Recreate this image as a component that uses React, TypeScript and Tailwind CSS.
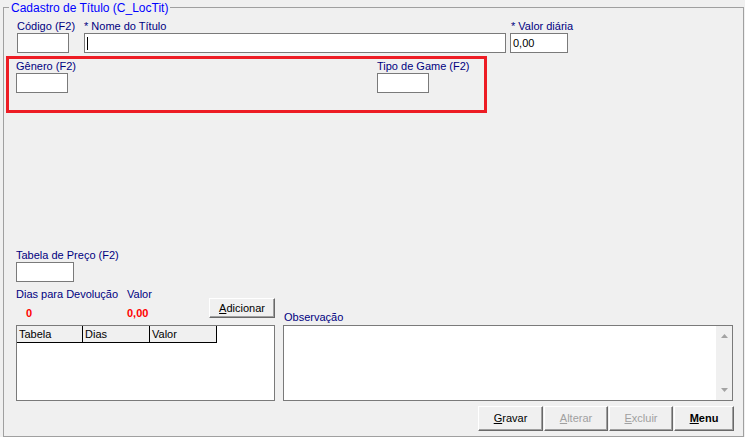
import React from "react";

const font = { fontFamily: '"Liberation Sans", Arial, sans-serif' };

function Label({ children, className = "" }: { children: React.ReactNode; className?: string }) {
  return <div className={`h-[13px] text-[11px] leading-[13px] text-[#000080] whitespace-nowrap ${className}`}>{children}</div>;
}

function Input({ className = "", children }: { className?: string; children?: React.ReactNode }) {
  return <div className={`h-[20px] bg-white border border-[#7a7a7a] ${className}`}>{children}</div>;
}

function Btn({ children, className = "" }: { children: React.ReactNode; className?: string }) {
  return (
    <div
      className={`flex items-center justify-center bg-[#f0f0f0] border border-t-white border-l-white border-r-[#696969] border-b-[#696969] shadow-[inset_-1px_-1px_0_#a0a0a0] text-[11px] leading-[13px] ${className}`}
    >
      {children}
    </div>
  );
}

export default function App() {
  return (
    <div className="w-[745px] h-[437px] bg-[#f0f0f0] pt-[7px] pl-[3px] overflow-hidden" style={font}>
      <div className="relative w-[741px] h-[430px] border border-[#a0a0a0]">
        <div className="absolute left-[5px] top-[-7px] px-[2px] bg-[#f0f0f0] text-[12px] leading-[14px] text-[#0000ff] whitespace-nowrap">
          Cadastro de Título (C_LocTit)
        </div>

        {/* row 1 */}
        <div className="flex mt-[12px]">
          <div className="ml-[13px] w-[52px]">
            <Label>Código (F2)</Label>
            <Input />
          </div>
          <div className="ml-[15px] w-[422px]">
            <Label>* Nome do Título</Label>
            <Input className="flex items-center pl-[2px]">
              <div className="w-[1px] h-[13px] bg-black" />
            </Input>
          </div>
          <div className="ml-[4px] w-[58px]">
            <Label className="pl-[1px]">* Valor diária</Label>
            <Input className="flex items-center pl-[2px] text-[11px] text-black">0,00</Input>
          </div>
        </div>

        {/* row 2 */}
        <div className="flex mt-[7px]">
          <div className="ml-[12px] w-[52px]">
            <Label>Gênero (F2)</Label>
            <Input />
          </div>
          <div className="ml-[309px] w-[52px]">
            <Label>Tipo de Game (F2)</Label>
            <Input />
          </div>
        </div>

        {/* red annotation */}
        <div className="absolute left-[2px] top-[48px] w-[481px] h-[57px] border-[3px] border-[#ed1c24]" />

        {/* row 3 */}
        <div className="ml-[12px] w-[58px] mt-[156px]">
          <Label>Tabela de Preço (F2)</Label>
          <Input />
        </div>

        {/* bottom section */}
        <div className="flex items-start mt-[6px]">
          <div className="ml-[12px] w-[259px]">
            <div className="flex items-start">
              <div className="w-[193px]">
                <div className="flex">
                  <Label className="w-[111px]">Dias para Devolução</Label>
                  <Label>Valor</Label>
                </div>
                <div className="flex mt-[6px] h-[13px] text-[11px] leading-[13px] font-bold text-[#ff0000]">
                  <div className="w-[111px] pl-[10px]">0</div>
                  <div>0,00</div>
                </div>
              </div>
              <Btn className="mt-[10px] w-[66px] h-[20px] text-black">
                <span>
                  <span className="underline">A</span>dicionar
                </span>
              </Btn>
            </div>
            <div className="mt-[5px] h-[76px] bg-white border border-[#7a7a7a]">
              <div className="flex text-[11px] leading-[13px] text-black">
                <div className="w-[66px] h-[17px] pt-[2px] pl-[2px] bg-[#f0f0f0] border-r border-b border-black">Tabela</div>
                <div className="w-[67px] h-[17px] pt-[2px] pl-[2px] bg-[#f0f0f0] border-r border-b border-black">Dias</div>
                <div className="w-[67px] h-[17px] pt-[2px] pl-[2px] bg-[#f0f0f0] border-r border-b border-black">Valor</div>
              </div>
            </div>
          </div>

          <div className="ml-[8px] w-[450px] mt-[23px]">
            <Label className="pl-[1px]">Observação</Label>
            <div className="mt-[1px] h-[76px] bg-white border border-[#7a7a7a] flex justify-end">
              <div className="w-[16px] h-full bg-[#f0f0f0] flex flex-col items-center justify-between py-[8px]">
                <svg width="7" height="4" viewBox="0 0 7 4">
                  <path d="M3.5 0 L7 4 L0 4 Z" fill="#a3a3a3" />
                </svg>
                <svg width="7" height="4" viewBox="0 0 7 4">
                  <path d="M0 0 L7 0 L3.5 4 Z" fill="#a3a3a3" />
                </svg>
              </div>
            </div>
          </div>
        </div>

        {/* action buttons */}
        <div className="flex mt-[5px] ml-[474px] gap-[1px]">
          <Btn className="w-[65px] h-[25px] text-black">
            <span>
              <span className="underline">G</span>ravar
            </span>
          </Btn>
          <Btn className="w-[64px] h-[25px] text-[#a0a0a0]">
            <span>
              <span className="underline">A</span>lterar
            </span>
          </Btn>
          <Btn className="w-[64px] h-[25px] text-[#a0a0a0]">
            <span>
              <span className="underline">E</span>xcluir
            </span>
          </Btn>
          <Btn className="w-[60px] h-[25px] text-black font-bold">
            <span>
              <span className="underline">M</span>enu
            </span>
          </Btn>
        </div>
      </div>
    </div>
  );
}
